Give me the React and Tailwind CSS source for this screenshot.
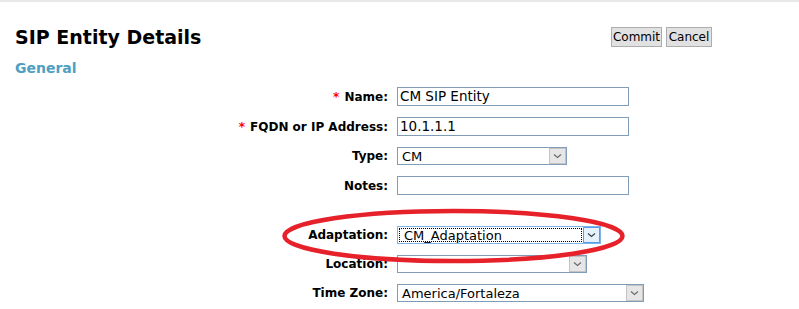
const Chevron = ({ color = "#6b6b6b" }) => (
  <svg width="9" height="6" viewBox="0 0 9 6" fill="none">
    <path d="M1 1.5 L4.5 4.5 L8 1.5" stroke={color} strokeWidth="1.2" />
  </svg>
);

const Label = ({ text, required }) => (
  <div className="w-[388px] shrink-0 text-right text-[12px] font-bold text-black leading-none">
    {required && <span className="text-[#ff0000] mr-[5px]">*</span>}
    {text}:
  </div>
);

const TextInput = ({ value }) => (
  <div className="ml-[9px] w-[232px] h-[19px] border border-[#7f9db9] bg-white px-[2px] flex items-center text-[13.5px] text-black leading-none">
    {value}
  </div>
);

const Select = ({ value, width, focused }) => (
  <div
    className={
      "ml-[9px] h-[18px] border bg-white flex items-stretch text-[13px] text-black leading-none " +
      width +
      (focused ? " border-[#7eb4ea]" : " border-[#7f9db9]")
    }
  >
    <div
      className={
        "flex-1 flex items-center px-[4px] " +
        (focused ? "border border-dotted border-black m-[1px] bg-white" : "")
      }
    >
      {value}
    </div>
    {focused ? (
      <div className="w-[17px] border border-[#569de5] bg-[#e5f1fb] flex items-center justify-center">
        <Chevron color="#404040" />
      </div>
    ) : (
      <div className="w-[17px] border border-[#c4c4c4] bg-[#e6e6e6] flex items-center justify-center">
        <Chevron />
      </div>
    )}
  </div>
);

export default function App() {
  return (
    <div className="relative w-[799px] h-[309px] bg-white border-t-2 border-[#e8e8e8] font-['DejaVu_Sans',Verdana,sans-serif] overflow-hidden">
      <div className="flex items-start pl-[15px] pt-[24px]">
        <div>
          <h1 className="text-[19px] font-bold leading-[22px] text-black">SIP Entity Details</h1>
          <h2 className="mt-[12px] text-[14px] font-bold leading-[17px] text-[#4e9fc2]">General</h2>
        </div>
        <div className="ml-auto mr-[87px] mt-[1px] flex gap-[4px]">
          <button className="w-[51px] h-[20px] border border-[#adadad] bg-[#e1e1e1] text-[12px] text-black leading-none">
            Commit
          </button>
          <button className="w-[46px] h-[20px] border border-[#adadad] bg-[#e1e1e1] text-[12px] text-black leading-none">
            Cancel
          </button>
        </div>
      </div>

      <div className="mt-[10px] flex flex-col">
        <div className="flex items-center">
          <Label text="Name" required />
          <TextInput value="CM SIP Entity" />
        </div>
        <div className="mt-[11px] flex items-center">
          <Label text="FQDN or IP Address" required />
          <TextInput value="10.1.1.1" />
        </div>
        <div className="mt-[11px] flex items-center">
          <Label text="Type" />
          <Select value="CM" width="w-[170px]" />
        </div>
        <div className="mt-[11px] flex items-center">
          <Label text="Notes" />
          <TextInput value="" />
        </div>
        <div className="mt-[31px] flex items-center">
          <Label text="Adaptation" />
          <Select value="CM_Adaptation" width="w-[204px]" focused />
        </div>
        <div className="mt-[11px] flex items-center">
          <Label text="Location" />
          <Select value="" width="w-[190px]" />
        </div>
        <div className="mt-[11px] flex items-center">
          <Label text="Time Zone" />
          <Select value="America/Fortaleza" width="w-[247px]" />
        </div>
      </div>

      {/* red annotation ring */}
      <svg className="absolute left-[280px] top-[203px] pointer-events-none" width="350" height="62" viewBox="0 0 350 62">
        <ellipse cx="173.5" cy="31" rx="169" ry="25" fill="none" stroke="#e6212a" strokeWidth="4.5" />
      </svg>
    </div>
  );
}
